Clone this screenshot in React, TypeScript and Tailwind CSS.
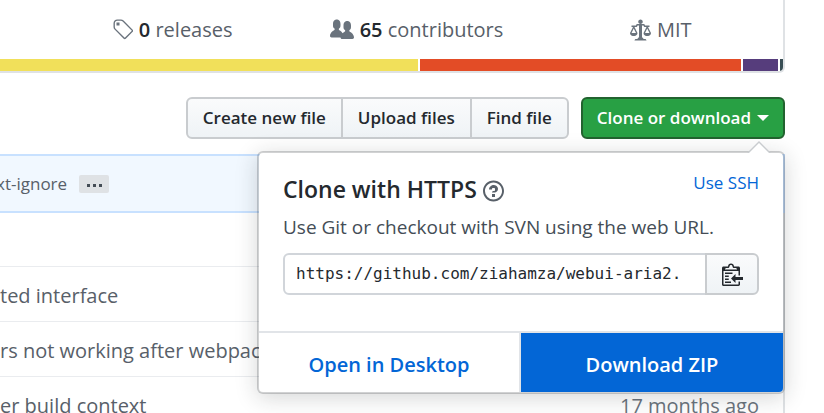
import type { ReactNode } from "react";

type IconProps = { path: string; wide?: boolean; className?: string };

const paths = {
  tag: "M7.73 1.73C7.26 1.26 6.62 1 5.96 1H3.5C2.13 1 1 2.13 1 3.5v2.47c0 .66.27 1.3.73 1.77l6.06 6.06c.39.39 1.02.39 1.41 0l4.59-4.59a.996.996 0 0 0 0-1.41L7.73 1.73zM2.38 7.09c-.31-.3-.47-.7-.47-1.13V3.5c0-.88.72-1.59 1.59-1.59h2.47c.42 0 .83.16 1.13.47l6.14 6.13-4.73 4.73-6.13-6.15zM3.01 3h2v2H3V3h.01z",
  people:
    "M16 12.999c0 .439-.45 1-1 1H7.995c-.539 0-.994-.447-.995-.999H1c-.54 0-1-.561-1-1 0-2.634 3-4 3-4s.229-.409 0-1c-.841-.621-1.058-.59-1-3 .058-2.419 1.367-3 2.5-3s2.442.58 2.5 3c.058 2.41-.159 2.379-1 3-.229.59 0 1 0 1s1.549.711 2.42 2.088C9.196 9.369 10 8.999 10 8.999s.229-.409 0-1c-.841-.62-1.058-.59-1-3 .058-2.419 1.367-3 2.5-3s2.437.581 2.495 3c.059 2.41-.158 2.38-1 3-.229.59 0 1 0 1s3.005 1.366 3.005 4",
  law: "M7 4c-.83 0-1.5-.67-1.5-1.5S6.17 1 7 1s1.5.67 1.5 1.5S7.83 4 7 4zm7 6c0 1.11-.89 2-2 2h-1c-1.11 0-2-.89-2-2l2-4h-1c-.55 0-1-.45-1-1H8v8c.42 0 1 .45 1 1h1c.42 0 1 .45 1 1H3c0-.55.58-1 1-1h1c0-.55.58-1 1-1h.03L6 5H5c0 .55-.45 1-1 1H3l2 4c0 1.11-.89 2-2 2H2c-1.11 0-2-.89-2-2l2-4H1V5h3c0-.55.45-1 1-1h4c.55 0 1 .45 1 1h3v1h-1l2 4zM2.5 7L1 10h3L2.5 7zM13 10l-1.5-3-1.5 3h3z",
  question:
    "M6 10h2v2H6v-2zm4-3.5C10 8.64 8 9 8 9H6c0-.55.45-1 1-1h.5c.28 0 .5-.22.5-.5v-1c0-.28-.22-.5-.5-.5h-1c-.28 0-.5.22-.5.5V7H4c0-1.5 1.5-3 3-3s3 1 3 2.5zM7 2.3c3.14 0 5.7 2.56 5.7 5.7s-2.56 5.7-5.7 5.7A5.71 5.71 0 0 1 1.3 8c0-3.14 2.56-5.7 5.7-5.7zM7 1C3.14 1 0 4.14 0 8s3.14 7 7 7 7-3.14 7-7-3.14-7-7-7z",
  clippy:
    "M2 13h4v1H2v-1zm5-6H2v1h5V7zm2 3V8l-3 3 3 3v-2h5v-2H9zM4.5 9H2v1h2.5V9zM2 12h2.5v-1H2v1zm9 1h1v2c-.02.28-.11.52-.3.7-.19.18-.42.28-.7.3H1c-.55 0-1-.45-1-1V4c0-.55.45-1 1-1h3c0-1.11.89-2 2-2 1.11 0 2 .89 2 2h3c.55 0 1 .45 1 1v5h-1V6H1v9h10v-2zM2 5h8c0-.55-.45-1-1-1H8c-.55 0-1-.45-1-1s-.45-1-1-1-1 .45-1 1-.45 1-1 1H3c-.55 0-1 .45-1 1z",
};

function Icon({ path, wide = false, className = "" }: IconProps) {
  return (
    <svg
      aria-hidden="true"
      viewBox={wide ? "0 0 16 16" : "0 0 14 16"}
      className={`h-6 shrink-0 fill-current ${wide ? "w-6" : "w-[21px]"} ${className}`}
    >
      <path fillRule="evenodd" d={path} />
    </svg>
  );
}

function Stat({ icon, wide, count, label }: { icon: string; wide?: boolean; count?: string; label: string }) {
  return (
    <a href="#" className="flex items-center justify-center gap-1.5 text-[#586069]">
      <Icon path={icon} wide={wide} className="text-[#6a737d]" />
      <span>
        {count && <span className="font-semibold text-[#24292e]">{count} </span>}
        {label}
      </span>
    </a>
  );
}

function GroupButton({ children }: { children: ReactNode }) {
  return (
    <button className="-ml-0.5 border-2 border-[#c9cccf] bg-linear-to-b from-[#fafbfc] to-[#eff3f6] px-[15px] first:ml-0 first:rounded-l-md last:rounded-r-md">
      {children}
    </button>
  );
}

function CloneMenu() {
  return (
    <div className="absolute top-full right-0 z-10 mt-3 w-[528px] rounded-md border-2 border-[#1b1f23]/20 bg-white bg-clip-padding font-normal text-[#24292e] shadow-[0_4px_22px_rgba(27,31,35,0.18)]">
      <svg aria-hidden="true" viewBox="0 0 24 12" className="absolute -top-3 right-3 h-3 w-6">
        <path d="M0 12 12 0l12 12z" fill="#c9cccf" />
        <path d="M2 12 12 2l10 10z" fill="#fff" />
      </svg>
      <div className="px-6 pt-4 pb-9">
        <div className="flex items-start justify-between">
          <h4 className="flex h-10 items-center gap-1.5 text-[23px] font-semibold">
            Clone with HTTPS
            <a href="#" aria-label="Which remote URL should I use?" className="pt-1 text-[#586069]">
              <Icon path={paths.question} />
            </a>
          </h4>
          <button className="h-7 text-[17px] text-[#0366d6]">Use SSH</button>
        </div>
        <p className="h-9 text-[19px] leading-9 text-[#444d56]">
          Use Git or checkout with SVN using the web URL.
        </p>
        <div className="mt-2 flex h-[42px]">
          <input
            aria-label="Clone this repository at"
            readOnly
            defaultValue="https://github.com/ziahamza/webui-aria2.git"
            className="min-w-0 flex-1 rounded-l-md border-2 border-[#d1d5da] bg-white pr-6 pl-[11px] font-['DejaVu_Sans_Mono',monospace] text-[16px] text-[#24292e] outline-none"
          />
          <button
            aria-label="Copy to clipboard"
            className="-ml-0.5 flex w-[54px] items-center justify-center rounded-r-md border-2 border-[#c9cccf] bg-linear-to-b from-[#fafbfc] to-[#eff3f6]"
          >
            <Icon path={paths.clippy} />
          </button>
        </div>
      </div>
      <div className="grid h-[61px] grid-cols-2 border-t-2 border-[#e1e4e8] text-[20px] font-semibold">
        <a href="#" className="flex items-center justify-center border-r-2 border-[#e1e4e8] pt-1 text-[#0366d6]">
          Open in Desktop
        </a>
        <a href="#" className="flex items-center justify-center rounded-br bg-[#0366d6] pt-1 text-white">
          Download ZIP
        </a>
      </div>
    </div>
  );
}

const commits = [
  { message: "", age: "" },
  { message: "ted interface", age: "" },
  { message: "rs not working after webpack", age: "" },
  { message: "er build context", age: "17 months ago" },
];

export default function App() {
  return (
    <main className="h-screen overflow-hidden bg-white pr-[39px] font-['Open_Sans','Noto_Sans',sans-serif] text-[20px] text-[#24292e]">
      <section className="overflow-hidden rounded-br-md border-r-2 border-b-2 border-[#dfe2e5]">
        <div className="grid h-[59px] grid-cols-3 pl-[50px]">
          <Stat icon={paths.tag} count="0" label="releases" />
          <Stat icon={paths.people} wide count="65" label="contributors" />
          <Stat icon={paths.law} label="MIT" />
        </div>
        <div className="flex h-3 gap-0.5">
          <span className="flex-[418] bg-[#f1e05a]" />
          <span className="flex-[321] bg-[#e34c26]" />
          <span className="flex-[35] bg-[#563d7c]" />
          <span className="flex-[3] bg-[#384d54]" />
        </div>
      </section>

      <div className="relative mt-6 flex h-[42px] justify-end gap-3 text-[17px] font-semibold">
        <div className="flex">
          <GroupButton>Create new file</GroupButton>
          <GroupButton>Upload files</GroupButton>
          <GroupButton>Find file</GroupButton>
        </div>
        <button
          aria-expanded="true"
          className="flex items-center gap-1.5 rounded-md border-2 border-[#22632f] bg-[#28a044] px-3.5 text-white"
        >
          Clone or download
          <span className="border-x-[6px] border-t-[6px] border-x-transparent border-t-white" />
        </button>
        <CloneMenu />
      </div>

      <section className="mt-[15px]">
        <div className="flex h-[59px] items-center gap-3 border-2 border-l-0 border-[#c8e1ff] bg-[#f1f8ff] text-[17px] text-[#586069]">
          <span className="-ml-1">xt-ignore</span>
          <button
            aria-label="Show full message"
            className="flex h-[18px] w-[30px] items-center justify-center gap-[3px] rounded-xs bg-[#dfe2e5]"
          >
            <span className="mt-1 size-[3px] bg-[#444d56]" />
            <span className="mt-1 size-[3px] bg-[#444d56]" />
            <span className="mt-1 size-[3px] bg-[#444d56]" />
          </button>
        </div>
        <ul className="border-r-2 border-[#dfe2e5]">
          {commits.map(({ message, age }) => (
            <li
              key={message}
              className="flex h-[55px] items-center justify-between border-t border-[#eaecef] pt-1 pr-6 text-[#586069] first:h-[53px] first:border-t-0"
            >
              <span>{message}</span>
              <span className="text-[#6a737d]">{age}</span>
            </li>
          ))}
        </ul>
      </section>
    </main>
  );
}
